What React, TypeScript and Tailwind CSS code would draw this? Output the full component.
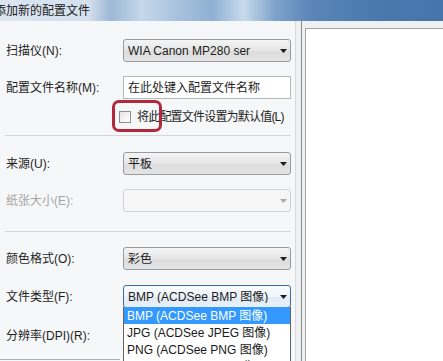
const FONT = '"Liberation Sans", "Noto Sans CJK SC", sans-serif'

function Arrow({ disabled }: { disabled?: boolean }) {
  return (
    <svg width="7" height="4" viewBox="0 0 7 4" className="shrink-0">
      <path d="M0 0h7L3.5 4z" fill={disabled ? '#a8a8a8' : '#1a1a1a'} />
    </svg>
  )
}

function Select({ value, disabled, focused }: { value?: string; disabled?: boolean; focused?: boolean }) {
  let cls = 'border-[#9a9a9a] bg-[linear-gradient(#f4f4f4,#e6e6e6_50%,#dcdcdc_51%,#e4e4e4)]'
  if (disabled) cls = 'border-[#d2d2d2] bg-[#f6f6f6]'
  if (focused) cls = 'border-[#3c6e9a] bg-[linear-gradient(#f8fbfe,#eef4fa_50%,#e2ecf6_51%,#e8f0f8)]'
  return (
    <div className={`w-[168px] h-[23px] rounded-[3px] border flex items-center pl-[4px] pr-[3px] ${cls}`}>
      <span className="flex-1 text-[12px] text-[#1c1c1c] leading-none truncate">{value}</span>
      <Arrow disabled={disabled} />
    </div>
  )
}

function Row({ label, children, disabled, mt }: { label: string; children: React.ReactNode; disabled?: boolean; mt: string }) {
  return (
    <div className={`flex items-center ${mt}`}>
      <span className={`w-[123px] pl-[6px] text-[12px] ${disabled ? 'text-[#a5a5a5]' : 'text-[#1e1e1e]'}`}>{label}</span>
      {children}
    </div>
  )
}

export default function App() {
  const fileTypes = [
    'BMP (ACDSee BMP 图像)',
    'JPG (ACDSee JPEG 图像)',
    'PNG (ACDSee PNG 图像)',
    'TIF (ACDSee TIFF 图像)',
  ]
  return (
    <div className="w-[443px] h-[361px] overflow-hidden bg-[#eef0f2] flex flex-col" style={{ fontFamily: FONT }}>
      <div className="h-[21px] shrink-0 flex items-center bg-[linear-gradient(90deg,#dbe6f1_0%,#d3e0ee_20%,#9cb8d6_25%,#c6d8ea_32%,#a8c2dd_40%,#8fb0d3_48%,#c8dbec_55%,#7fa3cb_62%,#5b86b8_70%,#4a79ae_85%,#4675ab_100%)]">
        <span className="ml-[-6px] text-[12px] text-[#1a1a1a]">添加新的配置文件</span>
      </div>
      <div className="flex flex-1 min-h-0">
        <div className="relative w-[296px] shrink-0 border-r border-[#d8dbde] bg-[#f6f7f8] flex flex-col">
          <Row label="扫描仪(N):" mt="mt-[18px]">
            <Select value="WIA Canon MP280 ser" />
          </Row>
          <Row label="配置文件名称(M):" mt="mt-[14px]">
            <div className="w-[168px] h-[23px] border border-[#b4b7bc] bg-white flex items-center pl-[4px] text-[12px] text-[#1e1e1e]">
              在此处键入配置文件名称
            </div>
          </Row>
          <div className="flex items-center mt-[11px] pl-[119px] h-[14px]">
            <div className="w-[12px] h-[12px] border border-[#8f8f8f] bg-[linear-gradient(135deg,#e4e4e4,#ffffff)]" />
            <span className="ml-[6px] text-[12px] tracking-[-0.8px] text-[#1e1e1e]">将此配置文件设置为默认值(L)</span>
          </div>
          <div className="mt-[11px] ml-[5px] w-[286px] h-px bg-[#d5d5d5]" />
          <Row label="来源(U):" mt="mt-[16px]">
            <Select value="平板" />
          </Row>
          <Row label="纸张大小(E):" mt="mt-[14px]" disabled>
            <Select disabled />
          </Row>
          <div className="mt-[19px] ml-[5px] w-[286px] h-px bg-[#d5d5d5]" />
          <Row label="颜色格式(O):" mt="mt-[15px]">
            <Select value="彩色" />
          </Row>
          <Row label="文件类型(F):" mt="mt-[15px]">
            <Select value="BMP (ACDSee BMP 图像)" focused />
          </Row>
          <Row label="分辨率(DPI)(R):" mt="mt-[16px]">
            <div className="w-[168px] h-[23px]" />
          </Row>
          <div className="mt-[12px] w-[120px] h-px bg-[#b0b0b0]" />

          <div className="absolute left-[123px] top-[286px] w-[168px] border border-[#646464] border-t-0 bg-white">
            {fileTypes.map((t, i) => (
              <div
                key={t}
                className={`h-[17px] flex items-center pl-[3px] text-[12px] ${i === 0 ? 'bg-[#3399ff] text-white' : 'text-[#1a1a1a]'}`}
              >
                {t}
              </div>
            ))}
          </div>

          <div className="absolute left-[112px] top-[79px] w-[50px] h-[32px] rounded-[7px] border-[3px] border-[#b3273a]" />
        </div>
        <div className="w-[5px] shrink-0" />
        <div className="w-px shrink-0 bg-[#8a8a8a]" />
        <div className="flex-1 pl-[3px] pt-[7px]">
          <div className="h-full border-l border-t border-[#a5a5a5] bg-white" />
        </div>
      </div>
    </div>
  )
}
